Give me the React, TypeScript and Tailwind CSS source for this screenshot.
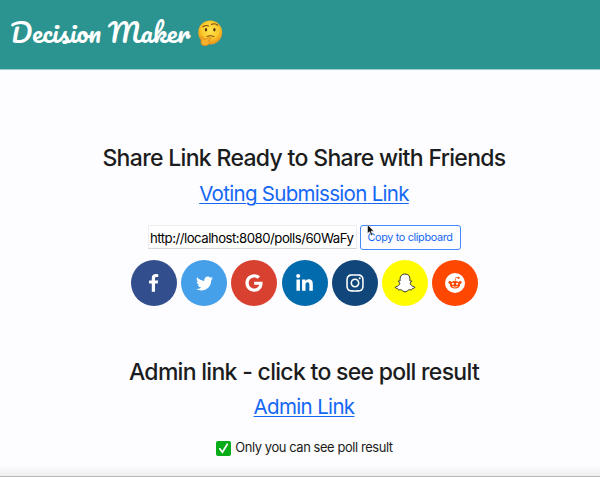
import type { ReactNode } from 'react';
import { FaTwitter, FaGoogle, FaLinkedinIn, FaInstagram } from 'react-icons/fa';

function ThinkingFace() {
  return (
    <svg viewBox="0 0 26 26" className="h-[26px] w-[26px]">
      <defs>
        <radialGradient id="face" cx="50%" cy="40%" r="55%">
          <stop offset="0" stopColor="#ffe650" />
          <stop offset="0.65" stopColor="#fbc92d" />
          <stop offset="1" stopColor="#e99a1d" />
        </radialGradient>
      </defs>
      <circle cx="13.2" cy="12.5" r="12" fill="url(#face)" />
      <ellipse cx="9" cy="9.7" rx="1.2" ry="1.8" fill="#5a350c" />
      <ellipse cx="17.4" cy="9.7" rx="1.2" ry="1.8" fill="#5a350c" />
      <path d="M6 6.8q3-2 5.5-.8M14.5 4.5q3-1.7 6.3.7" fill="none" stroke="#754a12" strokeWidth="1.1" strokeLinecap="round" />
      <path d="M10 16.3q3.5-1.7 7 .2" fill="none" stroke="#754a12" strokeWidth="1" strokeLinecap="round" />
      <path d="M4.3 17.5q1-1.3 2 .2l.7 2 5.5-2.2q2.1-.5 1.8 1-.3.8-3 2 2.1 0 1.4 2-1.2 3.2-4.7 3.3-4.2 0-4-4.1z" fill="#f7b12c" stroke="#dc8118" strokeWidth=".7" />
    </svg>
  );
}

function Facebook() {
  return (
    <svg viewBox="0 0 1792 1792" className="size-[19px]" fill="currentColor">
      <path d="M1343 12v264h-157q-86 0-116 36t-30 108v189h293l-39 296h-254v759H734V905H479V609h255V391q0-186 104-288.5T1115 0q147 0 228 12z" />
    </svg>
  );
}

function Snapchat() {
  return (
    <svg viewBox="0 0 22 20" className="h-5 w-[22px]">
      <path d="M11 1C7.7 1 6.1 3.2 6.1 5.8v2.1c-.7.4-1.6-.3-1.9.3-.3.8 1.6 1.1 1.7 1.9.1 1.2-1.9 3.5-4.5 3.9-.8.8.8 1.3 2.2 1.6.4.5.2 1.2.8 1.2 1 .1 2-.4 3.1.2 1.2.8 2 1.8 3.5 1.8s2.3-1 3.5-1.8c1.1-.6 2.1-.1 3.1-.2.6 0 .4-.7.8-1.2 1.4-.3 3-.8 2.2-1.6-2.6-.4-4.6-2.7-4.5-3.9.1-.8 2-1.1 1.7-1.9-.3-.6-1.2.1-1.9-.3V5.8C15.9 3.2 14.3 1 11 1Z" fill="#fff" stroke="#222" strokeWidth=".9" strokeLinejoin="round" />
    </svg>
  );
}

function Reddit() {
  return (
    <svg viewBox="0 0 20 20" className="h-5 w-5">
      <circle cx="10" cy="10" r="10" fill="#fff" />
      <g fill="#fc4702">
        <ellipse cx="10" cy="11.8" rx="5.1" ry="3.8" />
        <circle cx="4.8" cy="9.5" r="1.4" />
        <circle cx="15.2" cy="9.5" r="1.4" />
        <circle cx="13.6" cy="4.8" r="1.1" />
        <path d="m10 8.4.9-4 2.7.5" fill="none" stroke="#fc4702" strokeWidth=".7" />
      </g>
      <circle cx="7.9" cy="10.8" r="1.1" fill="#fff" />
      <circle cx="12.1" cy="10.8" r="1.1" fill="#fff" />
      <path d="M7.7 13.5q2.3 1.5 4.6 0" fill="none" stroke="#fff" strokeWidth=".8" strokeLinecap="round" />
    </svg>
  );
}

function ShareCircle({ label, color, children }: { label: string; color: string; children: ReactNode }) {
  return (
    <a aria-label={label} className={`flex size-[46px] items-center justify-center rounded-full text-white ${color}`}>
      {children}
    </a>
  );
}

export default function App() {
  return (
    <div className="flex h-[477px] w-[600px] flex-col overflow-hidden bg-[#fdfcfe] font-[Inter,sans-serif] text-[#1b1c20]">
      <header className="flex h-[70px] shrink-0 items-start border-b border-[#9bcfcc] bg-[#2c9490] pl-[10px]">
        <h1 className="mt-[13px] w-[187px] whitespace-nowrap font-[Pacifico,cursive] text-[26.4px] leading-[38px] font-normal text-white">
          Decision Maker
        </h1>
        <div className="mt-5">
          <ThinkingFace />
        </div>
      </header>
      <main className="flex grow flex-col items-center pl-2 whitespace-nowrap">
        <h2 className="mt-[72px] text-[23px] leading-8 font-medium tracking-[-0.67px]">Share Link Ready to Share with Friends</h2>
        <a className="mt-1 text-[20.5px] leading-8 tracking-[-0.7px] text-[#1468f3] underline decoration-1 underline-offset-2">Voting Submission Link</a>
        <div className="mt-[15px] flex h-[25px] gap-[3px]">
          <div className="h-6 w-[209px] border border-[#eeeef0] border-b-[#d5d5d8] bg-white pl-[1.5px] text-[13.2px] leading-6 tracking-[-0.5px] text-black">
            http://localhost:8080/polls/60WaFy
          </div>
          <button className="relative h-[25px] w-[101px] rounded-[3px] border border-[#4389f9] text-[10.8px] leading-[24px] tracking-[-0.32px] text-[#1468f3]">
            Copy to clipboard
            <svg viewBox="0 0 8 12" className="absolute top-[-2px] left-[6px] h-3 w-2">
              <path d="M.5.5v9l2-1.8 1.7 3.8 1.5-.7-1.7-3.6h2.8z" fill="#111" stroke="#fff" strokeWidth=".5" />
            </svg>
          </button>
        </div>
        <div className="mt-[10px] ml-[1px] flex gap-[4.2px]">
          <ShareCircle label="Facebook" color="bg-[#334e8d]"><Facebook /></ShareCircle>
          <ShareCircle label="Twitter" color="bg-[#459fe9]"><FaTwitter size={17} /></ShareCircle>
          <ShareCircle label="Google" color="bg-[#d84030]"><FaGoogle size={18} /></ShareCircle>
          <ShareCircle label="LinkedIn" color="bg-[#026bad]"><FaLinkedinIn size={19} /></ShareCircle>
          <ShareCircle label="Instagram" color="bg-[#11467a]"><FaInstagram size={20} /></ShareCircle>
          <ShareCircle label="Snapchat" color="bg-[#fffc00]"><Snapchat /></ShareCircle>
          <ShareCircle label="Reddit" color="bg-[#fe4701]"><Reddit /></ShareCircle>
        </div>
        <h2 className="mt-[50px] text-[23px] leading-8 font-medium tracking-[-0.7px]">Admin link - click to see poll result</h2>
        <a className="mt-[3px] text-[20.5px] leading-8 tracking-[-0.65px] text-[#1468f3] underline decoration-1 underline-offset-2">Admin Link</a>
        <p className="mt-[15px] ml-[1px] flex items-center gap-1 text-[12.9px] leading-5 tracking-[-0.4px]">
          <svg viewBox="0 0 15 15" className="size-[15px]">
            <rect width="15" height="15" rx="2" fill="#08ac19" />
            <path d="m3.8 7.8 2.6 3.4 4.9-8" fill="none" stroke="#fff" strokeWidth="1.7" strokeLinecap="round" />
          </svg>
          Only you can see poll result
        </p>
      </main>
      <footer className="h-3 shrink-0 border-b border-[#b8b8bb] bg-linear-to-b from-[#fdfcfe] to-[#eeeeef]" />
    </div>
  );
}
